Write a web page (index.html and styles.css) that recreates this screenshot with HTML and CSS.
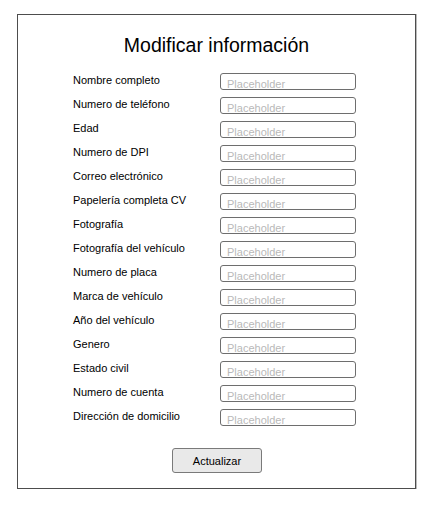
FILE: index.html
```html
<!DOCTYPE html>
<html lang="es">
<head>
<meta charset="utf-8">
<title>Modificar información</title>
<link rel="stylesheet" href="styles.css">
</head>
<body>
<div class="card">
  <h1 class="title">Modificar información</h1>
  <form class="form">
    <div class="row"><label class="label">Nombre completo</label><input class="field" placeholder="Placeholder"></div>
    <div class="row"><label class="label">Numero de teléfono</label><input class="field" placeholder="Placeholder"></div>
    <div class="row"><label class="label">Edad</label><input class="field" placeholder="Placeholder"></div>
    <div class="row"><label class="label">Numero de DPI</label><input class="field" placeholder="Placeholder"></div>
    <div class="row"><label class="label">Correo electrónico</label><input class="field" placeholder="Placeholder"></div>
    <div class="row"><label class="label">Papelería completa CV</label><input class="field" placeholder="Placeholder"></div>
    <div class="row"><label class="label">Fotografía</label><input class="field" placeholder="Placeholder"></div>
    <div class="row"><label class="label">Fotografía del vehículo</label><input class="field" placeholder="Placeholder"></div>
    <div class="row"><label class="label">Numero de placa</label><input class="field" placeholder="Placeholder"></div>
    <div class="row"><label class="label">Marca de vehículo</label><input class="field" placeholder="Placeholder"></div>
    <div class="row"><label class="label">Año del vehículo</label><input class="field" placeholder="Placeholder"></div>
    <div class="row"><label class="label">Genero</label><input class="field" placeholder="Placeholder"></div>
    <div class="row"><label class="label">Estado civil</label><input class="field" placeholder="Placeholder"></div>
    <div class="row"><label class="label">Numero de cuenta</label><input class="field" placeholder="Placeholder"></div>
    <div class="row"><label class="label">Dirección de domicilio</label><input class="field" placeholder="Placeholder"></div>
    <div class="actions"><button type="button" class="btn">Actualizar</button></div>
  </form>
</div>
</body>
</html>
```
FILE: styles.css
```css
* { box-sizing: border-box; }
html, body { margin: 0; padding: 0; background: #fff; }
body {
  font-family: "Liberation Sans", Arial, sans-serif;
  color: #000;
  padding: 14px 0 0 17px;
}
.card {
  width: 399px;
  height: 475px;
  border: 1px solid #4d4d4d;
  box-shadow: 1px 0 0 #bbb, 0 1px 0 #bbb;
  padding-top: 18px;
}
.title {
  margin: 0;
  font-weight: normal;
  font-size: 19.5px;
  line-height: 24px;
  text-align: center;
}
.form {
  margin: 16px 0 0 55px;
  display: flex;
  flex-direction: column;
  gap: 7px;
}
.row {
  display: flex;
  align-items: flex-start;
  height: 17px;
}
.label {
  width: 147px;
  font-size: 11px;
  line-height: 14px;
}
.field {
  width: 136px;
  height: 17px;
  border: 1px solid #6e6e6e;
  border-radius: 3px;
  padding: 4px 6px 0;
  font-family: "Liberation Sans", Arial, sans-serif;
  font-size: 11px;
  line-height: 13px;
  outline: none;
}
.field::placeholder { color: #b9b9b9; }
.actions {
  display: flex;
  padding-left: 99px;
  margin-top: 15px;
}
.btn {
  width: 90px;
  height: 25px;
  background: #e9e9e9;
  border: 1px solid #7a7a7a;
  border-radius: 3px;
  font-family: "Liberation Sans", Arial, sans-serif;
  font-size: 11px;
  color: #000;
  padding: 0;
}
```
